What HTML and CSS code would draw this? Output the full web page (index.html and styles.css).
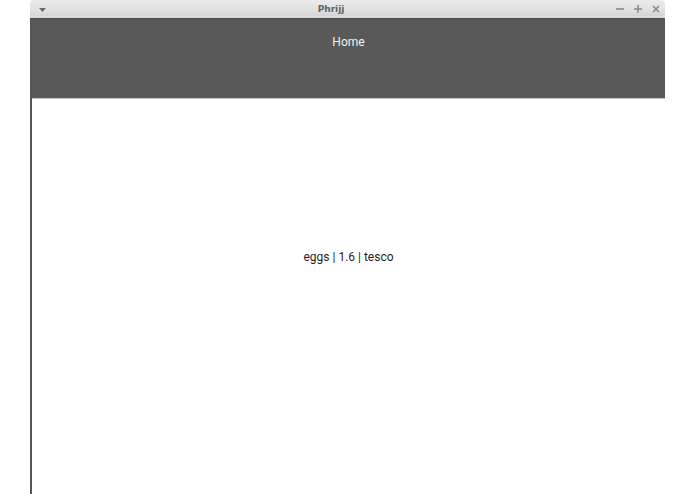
FILE: index.html
```html
<!DOCTYPE html>
<html>
<head>
<meta charset="utf-8">
<link rel="stylesheet" href="styles.css">
</head>
<body>
<div class="screen">
  <div class="window">
    <div class="titlebar">
      <div class="tb-left">
        <svg class="menu-icon" width="7" height="4" viewBox="0 0 7 4"><polygon points="0,0 7,0 3.5,4" fill="#6a6a6a"/></svg>
      </div>
      <div class="tb-title">Phrijj</div>
      <div class="tb-right">
        <svg class="ctl" width="8" height="8" viewBox="0 0 8 8"><rect x="0" y="3.2" width="8" height="1.6" fill="#8a8a8a"/></svg>
        <svg class="ctl" width="8" height="8" viewBox="0 0 8 8"><rect x="0" y="3.2" width="8" height="1.6" fill="#8a8a8a"/><rect x="3.2" y="0" width="1.6" height="8" fill="#8a8a8a"/></svg>
        <svg class="ctl" width="8" height="8" viewBox="0 0 8 8"><path d="M1 1 L7 7 M7 1 L1 7" stroke="#8a8a8a" stroke-width="1.6"/></svg>
      </div>
    </div>
    <div class="body">
      <div class="header">Home</div>
      <div class="content">
        <div class="item">eggs | 1.6 | tesco</div>
      </div>
    </div>
  </div>
</div>
</body>
</html>
```

FILE: styles.css
```css
html, body {
  margin: 0;
  padding: 0;
  background: #ffffff;
  height: 100%;
  overflow: hidden;
}
.screen {
  display: flex;
  padding-left: 30px;
  height: 494px;
}
.window {
  width: 635px;
  display: flex;
  flex-direction: column;
  height: 100%;
}
.titlebar {
  height: 18px;
  flex: 0 0 18px;
  display: flex;
  align-items: center;
  background: linear-gradient(to bottom, #ebebeb 0%, #e0e0e0 60%, #d5d5d5 88%, #e2e2e2 94%, #cfcfcf 100%);
  border-top-left-radius: 4px;
  border-top-right-radius: 4px;
  box-sizing: border-box;
}
.tb-left {
  width: 20px;
  display: flex;
  justify-content: flex-start;
  padding-left: 9px;
  box-sizing: border-box;
  align-items: center;
}
.menu-icon {
  display: block;
  margin-top: 1px;
}
.tb-title {
  flex: 1;
  text-align: center;
  font-family: "DejaVu Sans", sans-serif;
  font-weight: bold;
  font-size: 9px;
  line-height: 18px;
  color: #5f5f5f;
}
.tb-right {
  width: 53px;
  display: flex;
  align-items: center;
  gap: 10px;
  padding-left: 4px;
  box-sizing: border-box;
}
.ctl {
  display: block;
  flex: 0 0 auto;
}
.body {
  flex: 1;
  border-left: 2px solid #555555;
  display: flex;
  flex-direction: column;
  background: #ffffff;
}
.header {
  height: 81px;
  flex: 0 0 81px;
  box-sizing: border-box;
  background: #595959;
  border-top: 1px solid #4a4a4a;
  border-bottom: 1px solid #c4c4c4;
  padding-top: 15px;
  text-align: center;
  font-family: Roboto, "Liberation Sans", sans-serif;
  font-size: 12px;
  line-height: 16px;
  color: #f0f0f0;
}
.content {
  flex: 1;
  padding-top: 150px;
  text-align: center;
  font-family: Roboto, "Liberation Sans", sans-serif;
  font-size: 12px;
  line-height: 16px;
  color: #1e1e1e;
}
```
